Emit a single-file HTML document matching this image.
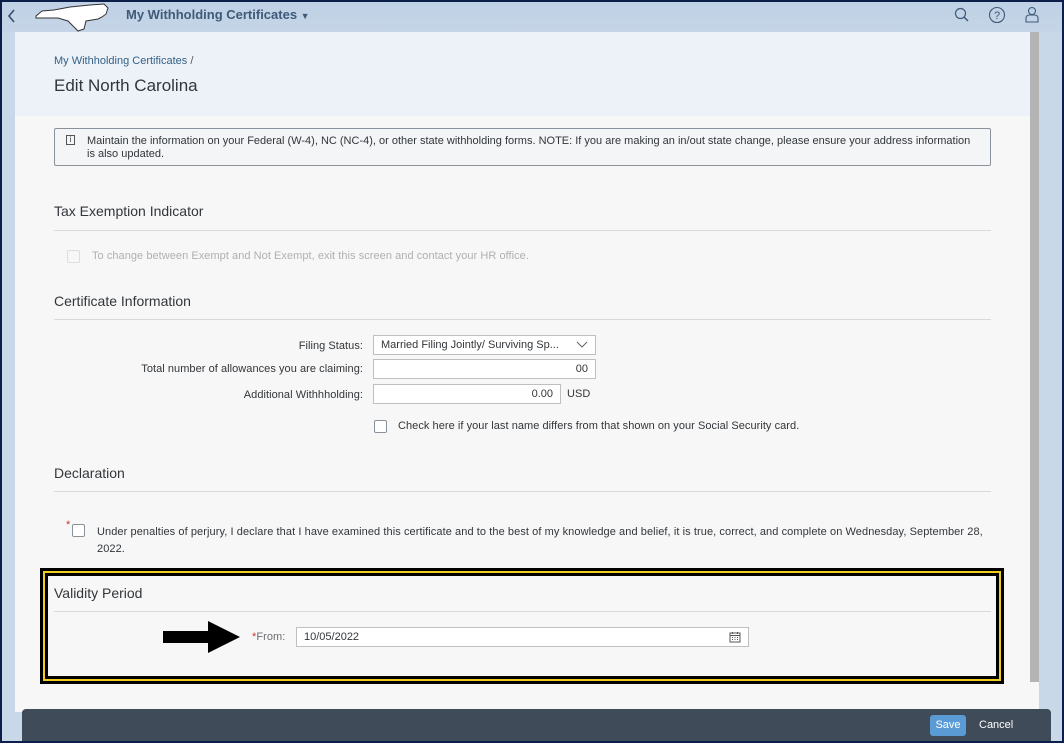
<!DOCTYPE html>
<html><head><meta charset="utf-8"><style>
*{box-sizing:border-box;margin:0;padding:0}
body{width:1064px;height:743px;overflow:hidden;font-family:"Liberation Sans",Arial,sans-serif;background:#0b1f4a;position:relative}
.a{position:absolute}
.t{color:#32363a;font-size:11px;white-space:nowrap;letter-spacing:0.05px}
.h{font-size:14px;color:#32363a}
.line{height:1px;background:#d9d9d9}
.cb{width:13px;height:13px;border:1px solid #89919a;background:#fff;border-radius:2px}
.inp{background:#fff;border:1px solid #bfbfbf;height:20px;font-size:11px;color:#32363a;line-height:18px;padding:0 7px}
</style></head><body>
<div class="a" style="left:2px;top:2px;width:1060px;height:739px;background:#c9d8e8"></div>
<div class="a" style="left:2px;top:2px;width:1060px;height:30px;background:linear-gradient(#bfd1e5,#c5d5e7)"></div>
<svg class="a" style="left:6px;top:8px" width="10" height="16"><path d="M8 2 L3 8 L8 14" stroke="#32506e" stroke-width="1.6" fill="none"/></svg>
<svg class="a" style="left:34px;top:2px" width="76" height="30"><path d="M2 14 L8 9 L20 8 L36 5 L56 3 L70 2 L74 6 L72 12 L68 15 L64 17 L58 18 L52 19 L50 27 L44 29 L40 25 L34 19 L24 16 L2 16 Z" fill="#fff" stroke="#333" stroke-width="1"/></svg>
<div class="a" style="left:126px;top:7px;font-size:13px;font-weight:bold;color:#3e5a78">My Withholding Certificates <span style="font-size:9px">▼</span></div>
<svg class="a" style="left:954px;top:7px" width="16" height="16"><circle cx="6.5" cy="6.5" r="5" stroke="#3e5a78" stroke-width="1.2" fill="none"/><path d="M10 10 L14 14" stroke="#3e5a78" stroke-width="1.4"/></svg>
<svg class="a" style="left:988px;top:6px" width="18" height="18"><circle cx="9" cy="9" r="7.5" stroke="#3e5a78" stroke-width="1.1" fill="none"/><text x="9" y="13" font-size="11" text-anchor="middle" fill="#3e5a78" font-family="Liberation Sans">?</text></svg>
<svg class="a" style="left:1024px;top:6px" width="16" height="18"><circle cx="8" cy="5" r="3.5" stroke="#3e5a78" stroke-width="1.1" fill="none"/><path d="M2 16 V12 Q2 9 6 9 H10 Q14 9 14 12 V16 Z" stroke="#3e5a78" stroke-width="1.1" fill="none"/></svg>
<div class="a" style="left:15px;top:32px;width:1015px;height:680px;background:#f7f7f7"></div>
<div class="a" style="left:15px;top:32px;width:1015px;height:84px;background:#edf2f8"></div>
<div class="a" style="left:1030px;top:32px;width:9px;height:650px;background:#b4b4b4"></div>
<div class="a" style="left:1030px;top:682px;width:9px;height:30px;background:#f7f7f7"></div>
<div class="a" style="left:54px;top:55px;font-size:11px;color:#346187">My Withholding Certificates <span style="color:#555">/</span></div>
<div class="a" style="left:54px;top:76px;font-size:17px;color:#32363a">Edit North Carolina</div>
<div class="a" style="left:54px;top:128px;width:937px;height:38px;border:1px solid #89919a;border-radius:2px;background:#f3f5f7"></div>
<div class="a" style="left:66px;top:135px;width:9px;height:10px;border:1px solid #555;font-size:8px;line-height:8px;text-align:center;color:#333">i</div>
<div class="a t" style="left:87px;top:135px;line-height:13px;letter-spacing:0">Maintain the information on your Federal (W-4), NC (NC-4), or other state withholding forms. NOTE: If you are making an in/out state change, please ensure your address information<br>is also updated.</div>
<div class="a h" style="left:54px;top:203px">Tax Exemption Indicator</div>
<div class="a line" style="left:54px;top:230px;width:937px"></div>
<div class="a cb" style="left:67px;top:250px;border-color:#ddd;background:#f7f7f7"></div>
<div class="a t" style="left:92px;top:250px;color:#b0b0b0">To change between Exempt and Not Exempt, exit this screen and contact your HR office.</div>
<div class="a h" style="left:54px;top:293px">Certificate Information</div>
<div class="a line" style="left:54px;top:319px;width:937px"></div>
<div class="a t" style="left:200px;top:340px;width:163px;text-align:right">Filing Status:</div>
<div class="a inp" style="left:373px;top:335px;width:223px">Married Filing Jointly/ Surviving Sp...</div>
<svg class="a" style="left:576px;top:341px" width="12" height="8"><path d="M1 1 L6 6 L11 1" stroke="#666" fill="none"/></svg>
<div class="a t" style="left:100px;top:363px;width:263px;text-align:right">Total number of allowances you are claiming:</div>
<div class="a inp" style="left:373px;top:359px;width:223px;text-align:right">00</div>
<div class="a t" style="left:100px;top:389px;width:263px;text-align:right">Additional Withhholding:</div>
<div class="a inp" style="left:373px;top:384px;width:188px;text-align:right">0.00</div>
<div class="a t" style="left:567px;top:388px">USD</div>
<div class="a cb" style="left:374px;top:420px"></div>
<div class="a t" style="left:398px;top:420px;letter-spacing:0.05px">Check here if your last name differs from that shown on your Social Security card.</div>
<div class="a h" style="left:54px;top:465px">Declaration</div>
<div class="a line" style="left:54px;top:491px;width:937px"></div>
<div class="a" style="left:66px;top:519px;color:#c0392b;font-size:11px">*</div>
<div class="a cb" style="left:72px;top:524px"></div>
<div class="a t" style="left:97px;top:524px;line-height:17px;letter-spacing:0.08px">Under penalties of perjury, I declare that I have examined this certificate and to the best of my knowledge and belief, it is true, correct, and complete on Wednesday, September 28,<br>2022.</div>
<div class="a" style="left:40px;top:568px;width:964px;height:116px;border:3px solid #000"></div>
<div class="a" style="left:43px;top:571px;width:958px;height:110px;border:2px solid #f2cf1f"></div>
<div class="a" style="left:45px;top:573px;width:954px;height:106px;border:3px solid #000"></div>
<div class="a h" style="left:54px;top:585px">Validity Period</div>
<div class="a line" style="left:54px;top:611px;width:937px"></div>
<svg class="a" style="left:160px;top:618px" width="82" height="38"><path d="M3 13 H48 V3 L80 19 L48 35 V25 H3 Z" fill="#000"/></svg>
<div class="a t" style="left:252px;top:631px;color:#6a6d70"><span style="color:#c0392b">*</span>From:</div>
<div class="a inp" style="left:296px;top:627px;width:453px">10/05/2022</div>
<svg class="a" style="left:729px;top:631px" width="12" height="12"><rect x="1" y="2" width="10" height="9" stroke="#555" fill="none"/><path d="M1 4.5 H11 M3 6.5h1M5.5 6.5h1M8 6.5h1M3 8.5h1M5.5 8.5h1M8 8.5h1M3.5 1v2M8.5 1v2" stroke="#555"/></svg>
<div class="a" style="left:22px;top:709px;width:1029px;height:32px;background:#3f4b58;border-radius:4px 4px 0 0"></div>
<div class="a" style="left:930px;top:715px;width:36px;height:21px;background:#5a9bd5;border-radius:3px;color:#fff;font-size:11px;line-height:21px;text-align:center">Save</div>
<div class="a" style="left:979px;top:719px;color:#fff;font-size:11px">Cancel</div>
</body></html>
